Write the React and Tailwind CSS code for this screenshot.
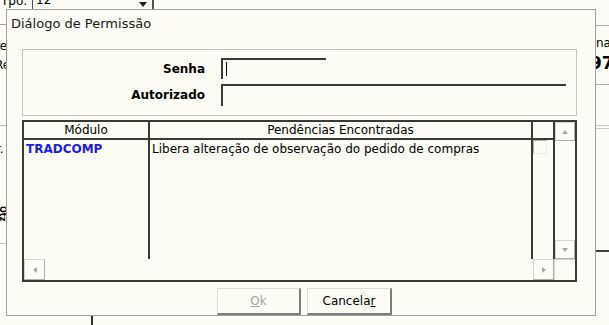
import React from "react";

const ScrollButton = ({ dir, className = "" }) => {
  const arrows = {
    up: "M1 5 L4 1 L7 5 Z",
    down: "M1 1 L4 5 L7 1 Z",
    left: "M5 1 L1 4 L5 7 Z",
    right: "M1 1 L5 4 L1 7 Z",
  };
  const vertical = dir === "up" || dir === "down";
  return (
    <div
      className={`flex items-center justify-center bg-[#fcfcf5] border border-[#d6d6ce] border-r-[#b0b0a8] border-b-[#b0b0a8] ${className}`}
    >
      <svg width={vertical ? 8 : 6} height={vertical ? 6 : 8} viewBox={vertical ? "0 0 8 6" : "0 0 6 8"}>
        <path d={arrows[dir]} fill="#a8a8a4" />
      </svg>
    </div>
  );
};

const App = () => {
  return (
    <div className="relative w-[609px] h-[325px] overflow-hidden bg-[#fcfcf5] font-['DejaVu_Sans',sans-serif] text-[12px] text-black">
      {/* janela de fundo */}
      <div className="absolute left-[1px] top-[-6px] leading-[14px]">Tpo:</div>
      <div className="absolute left-[32px] top-[-10px] w-[122px] h-[19px] border-l border-r-2 border-[#505050] pl-[3px] pt-[3px] leading-[14px]">
        12
        <svg className="absolute right-[5px] top-[12px]" width="8" height="5" viewBox="0 0 8 5">
          <path d="M0 0 L8 0 L4 5 Z" fill="#202020" />
        </svg>
      </div>
      <div className="absolute left-0 top-[24px] w-[8px] h-px bg-[#a0a0a0]" />
      <div className="absolute left-[-5px] top-[39px] leading-[14px]">re</div>
      <div className="absolute left-[-5px] top-[58px] leading-[14px]">Rep</div>
      <div className="absolute left-0 top-[125px] w-[8px] h-px bg-[#b8b8b0]" />
      <div className="absolute left-[-4px] top-[142px] leading-[14px]">r.</div>
      <div className="absolute left-[-2px] top-[206px] text-[8px] font-bold leading-[8px] rotate-90 origin-top-left translate-x-[8px]">Qtz</div>
      <div className="absolute left-0 top-[243px] w-[8px] h-px bg-[#c0c0b8]" />

      <div className="absolute left-[596px] top-[25px] w-[13px] h-px bg-[#b0b0a8]" />
      <div className="absolute left-[596px] top-[36px] text-[12px] leading-[14px]">na</div>
      <div className="absolute left-[590px] top-[53px] text-[17px] font-bold leading-[20px]">97</div>
      <div className="absolute left-[596px] top-[84px] w-[13px] h-px bg-[#b0b0a8]" />
      <div className="absolute left-[596px] top-[125px] w-[13px] h-px bg-[#c8c8c0]" />
      <div className="absolute left-[596px] top-[128px] w-[13px] h-px bg-[#c8c8c0]" />
      <div className="absolute left-[596px] top-[250px] w-[13px] h-[2px] bg-[#404040]" />
      <div className="absolute left-[91px] top-[315px] w-[2px] h-[12px] bg-[#303030]" />

      {/* diálogo */}
      <div className="absolute left-[6px] top-[9px] w-[590px] h-[307px] border border-[#a0a0a0] bg-[#fcfcf5] flex flex-col">
        <div className="h-[39px] pl-[4px] pt-[6px] text-[13px] leading-[16px] text-[#202020]">Diálogo de Permissão</div>

        <div className="ml-[15px] w-[555px] h-[67px] border border-[#c4c4bc] pt-[8px] flex flex-col gap-[5px]">
          <div className="flex items-center">
            <div className="w-[182px] text-right font-bold">Senha</div>
            <div className="ml-[16px] w-[105px] h-[21px] border-t-2 border-l-2 border-[#3c3c3c] pt-[2px] pl-[3px]">
              <div className="w-px h-[14px] bg-black" />
            </div>
          </div>
          <div className="flex items-center">
            <div className="w-[182px] text-right font-bold">Autorizado</div>
            <div className="ml-[16px] w-[345px] h-[22px] border-t-2 border-l-2 border-[#3c3c3c]" />
          </div>
        </div>

        <div className="mt-[4px] ml-[15px] w-[555px] h-[162px] border-2 border-[#3a3a3a] flex flex-col">
          <div className="flex h-[137px]">
            <div className="w-[531px] flex flex-col">
              <div className="flex h-[18px] border-b-2 border-[#3a3a3a] leading-[16px]">
                <div className="w-[126px] border-r-2 border-[#3a3a3a] text-center">Módulo</div>
                <div className="w-[383px] border-r-2 border-[#3a3a3a] text-center">Pendências Encontradas</div>
                <div className="w-[22px] border-r-2 border-[#3a3a3a]" />
              </div>
              <div className="flex flex-1 leading-[16px]">
                <div className="w-[126px] border-r-2 border-[#3a3a3a] pl-[2px] pt-px font-bold text-[#1c1cee]">TRADCOMP</div>
                <div className="w-[383px] border-r-2 border-[#3a3a3a] pl-[2px] pt-px">Libera alteração de observação do pedido de compras</div>
                <div className="w-[22px] border-r-2 border-[#3a3a3a]">
                  <div className="w-[14px] h-[14px] border border-[#b0b0a8] border-r-[#ececE4] border-b-[#ececE4] bg-[#fcfcf5]" />
                </div>
              </div>
            </div>
            <div className="w-[21px] flex flex-col">
              <ScrollButton dir="up" className="h-[19px]" />
              <div className="flex-1" />
              <ScrollButton dir="down" className="h-[19px]" />
            </div>
          </div>
          <div className="flex h-[21px]">
            <ScrollButton dir="left" className="w-[21px]" />
            <div className="flex-1" />
            <ScrollButton dir="right" className="w-[21px]" />
            <div className="w-[21px] border-l border-t border-[#d6d6ce]" />
          </div>
        </div>

        <div className="mt-[6px] ml-[210px] flex gap-[6px]">
          <button className="w-[84px] h-[27px] border border-[#dcdcd4] border-r-2 border-b-2 border-r-[#7c7c7c] border-b-[#7c7c7c] bg-[#fcfcf5] text-[#a4a4a0] text-[12px]">
            <span className="underline">O</span>k
          </button>
          <button className="w-[85px] h-[27px] border border-[#dcdcd4] border-r-2 border-b-2 border-r-[#7c7c7c] border-b-[#7c7c7c] bg-[#fcfcf5] text-black text-[12px]">
            Cancela<span className="underline">r</span>
          </button>
        </div>
      </div>
    </div>
  );
};

export default App;
